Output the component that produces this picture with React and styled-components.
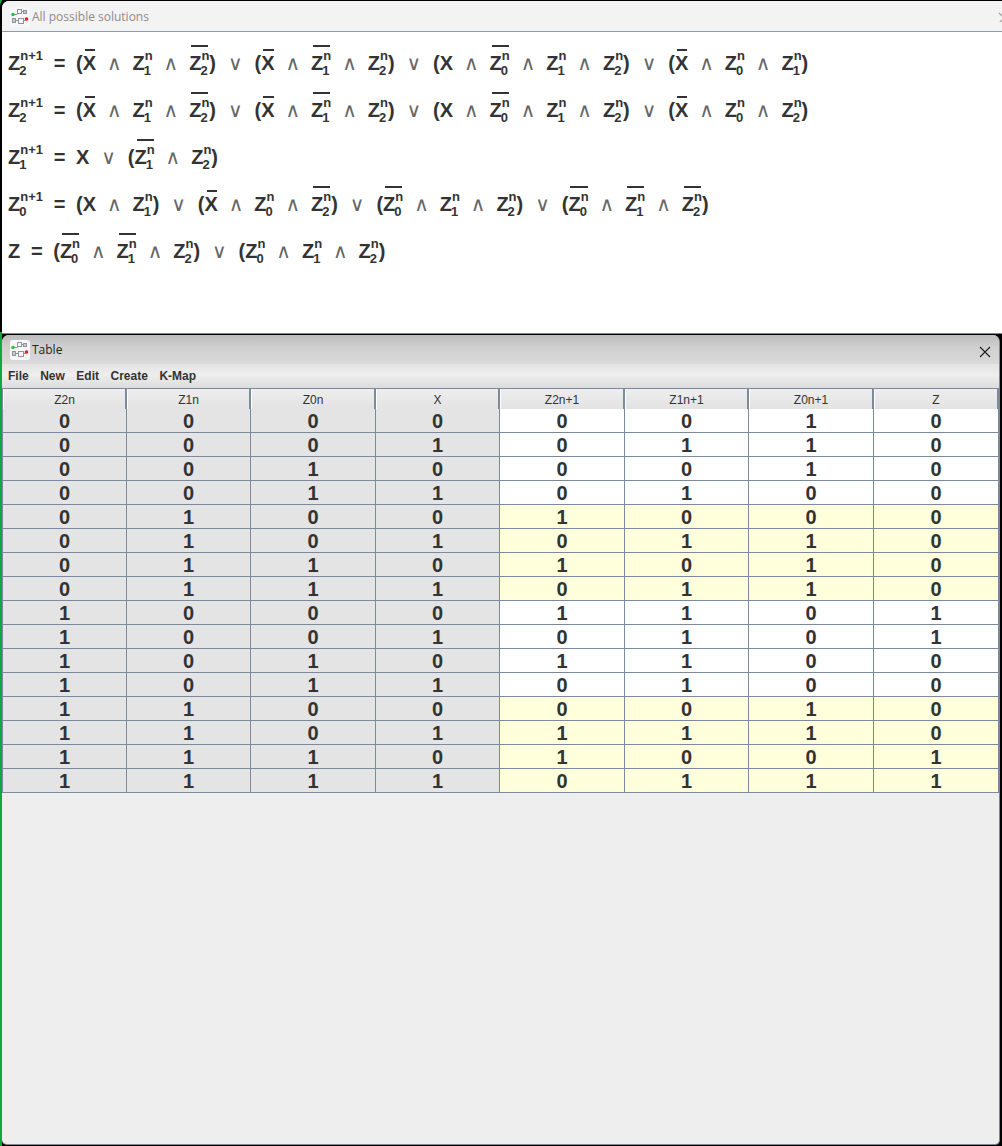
import styled, { createGlobalStyle } from "styled-components";

const GlobalStyle = createGlobalStyle`
html, body {
    margin: 0;
    padding: 0;
    background: #000000;
}
`

const FORMULAS = [
    "Z2+ = ( X' & z1 & z2' ) | ( X' & z1' & z2 ) | ( X & z0' & z1 & z2 ) | ( X' & z0 & z1 )",
    "Z2+ = ( X' & z1 & z2' ) | ( X' & z1' & z2 ) | ( X & z0' & z1 & z2 ) | ( X' & z0 & z2 )",
    "Z1+ = X | ( z1' & z2 )",
    "Z0+ = ( X & z1 ) | ( X' & z0 & z2' ) | ( z0' & z1 & z2 ) | ( z0' & z1' & z2' )",
    "Z = ( z0' & z1' & z2 ) | ( z0 & z1 & z2 )",
]

const HEADERS = ["Z2n", "Z1n", "Z0n", "X", "Z2n+1", "Z1n+1", "Z0n+1", "Z"]

const ROWS = [
    "00000010", "00010110", "00100010", "00110100",
    "01001000", "01010110", "01101010", "01110110",
    "10001101", "10010101", "10101100", "10110100",
    "11000010", "11011110", "11101001", "11110111",
]

const COLUMNS = "124px 124px 125px 124px 125px 124px 125px 125px"

function AppIcon(){
    return(
        <svg width="20" height="20" viewBox="0 0 20 20">
            <rect width="20" height="20" rx="3" fill="#f7f7f7"/>
            <g fill="none" stroke="#8d93a0" strokeWidth="1">
                <rect x="7.5" y="2.5" width="4" height="4"/>
                <rect x="13.5" y="3.5" width="3" height="3" fill="#c5cad2"/>
                <rect x="2.5" y="11.5" width="3" height="4" fill="#c5cad2"/>
                <rect x="8.5" y="11.5" width="5" height="5"/>
                <path d="M4 7.5h3.5M11.5 4.5h2M5.5 13.5h3M13.5 13.5h2"/>
            </g>
            <circle cx="3" cy="7.5" r="1.8" fill="#2ec04a"/>
            <circle cx="16.5" cy="12" r="1.8" fill="#e01f26"/>
        </svg>
    )
}

function CloseIcon({ color }){
    return(
        <svg width="12" height="12" viewBox="0 0 12 12">
            <path d="M1 1L11 11M11 1L1 11" stroke={color} strokeWidth="1.1" fill="none"/>
        </svg>
    )
}

function Token({ token }){
    if(token === "&") return <Operator>∧</Operator>
    if(token === "|") return <Operator $wide>∨</Operator>
    if(token === "=") return <Equals>=</Equals>
    if(token === "(" || token === ")") return <Big>{token}</Big>
    if(token === "Z") return <Big>Z</Big>
    if(token === "X") return <Big>X</Big>
    if(token === "X'") return <BarredX>X</BarredX>

    const isNext = token.endsWith("+")
    const barred = token.endsWith("'")
    return(
        <Term $barred={barred}>
            <Big>Z</Big>
            <Scripts>
                <Sup>{isNext ? "n+1" : "n"}</Sup>
                <Sub>{token[1]}</Sub>
            </Scripts>
        </Term>
    )
}

function TitleBar(){
    return(
        <SolutionsTitle>
            <AppIcon/>
            <SolutionsCaption>All possible solutions</SolutionsCaption>
            <CloseSlot><CloseIcon color="#9a9a9a"/></CloseSlot>
        </SolutionsTitle>
    )
}

export default function App(){
    return(
        <Desktop>
            <GlobalStyle/>
            <SolutionsWindow>
                <TitleBar/>
                <Formulas>
                    {FORMULAS.map((formula, i) => (
                        <FormulaLine key={i}>
                            {formula.split(" ").map((token, j) => <Token key={j} token={token}/>)}
                        </FormulaLine>
                    ))}
                </Formulas>
            </SolutionsWindow>
            <TableWindow>
                <TableTitle>
                    <AppIcon/>
                    <TableCaption>Table</TableCaption>
                    <TableClose><CloseIcon color="#1c1c1c"/></TableClose>
                </TableTitle>
                <MenuBar>
                    {["File", "New", "Edit", "Create", "K-Map"].map(item => <MenuItem key={item}>{item}</MenuItem>)}
                </MenuBar>
                <TruthTable>
                    <HeaderRow>
                        {HEADERS.map((header, i) => <HeaderCell key={i}>{header}</HeaderCell>)}
                    </HeaderRow>
                    {ROWS.map((row, i) => (
                        <DataRow key={i}>
                            {row.split("").map((value, j) => (
                                <Cell key={j} $input={j < 4} $highlight={j >= 4 && row[1] === "1"}>{value}</Cell>
                            ))}
                        </DataRow>
                    ))}
                </TruthTable>
            </TableWindow>
        </Desktop>
    )
}

const Desktop = styled.div`
width: 1002px;
height: 1146px;
overflow: hidden;
display: flex;
flex-direction: column;
align-items: flex-start;
padding-top: 1px;
box-sizing: border-box;
background: linear-gradient(to right, #0fa83c 0, #0fa83c 2px, #000000 2px);
font-family: "Liberation Sans", Arial, sans-serif;
`
const SolutionsWindow = styled.div`
width: 1000px;
height: 333px;
margin-left: 2px;
background-color: #FFFFFF;
border-radius: 7px 0 0 0;
border-bottom: 1px solid #7d8894;
box-shadow: -2px -2px 0 0 #000000;
box-sizing: border-box;
overflow: hidden;
flex-shrink: 0;
`
const SolutionsTitle = styled.div`
height: 31px;
background-color: #f3f3f3;
border-bottom: 1px solid #8b9cb0;
box-sizing: border-box;
display: flex;
align-items: center;
padding: 1px 0 0 8px;
`
const SolutionsCaption = styled.div`
margin-left: 2px;
font-family: "Open Sans", sans-serif;
font-size: 12px;
color: #8c8c8c;
flex: 1;
`
const CloseSlot = styled.div`
width: 4px;
height: 12px;
overflow: hidden;
margin-top: -1px;
`
const Formulas = styled.div`
padding: 7px 0 0 6px;
color: #333333;
`
const FormulaLine = styled.div`
display: flex;
align-items: center;
height: 47px;
`
const Big = styled.span`
display: block;
font-size: 20px;
font-weight: 700;
line-height: 30px;
`
const Term = styled.div`
display: flex;
position: relative;
height: 30px;
${props => props.$barred && `
&::before {
    content: "";
    position: absolute;
    top: -3px;
    left: 2px;
    right: 1px;
    height: 2px;
    background-color: #333333;
}
`}
`
const BarredX = styled(Big)`
position: relative;
&::before {
    content: "";
    position: absolute;
    top: 1px;
    left: 2px;
    right: 1px;
    height: 2px;
    background-color: #333333;
}
`
const Scripts = styled.div`
display: flex;
flex-direction: column;
font-size: 13px;
font-weight: 700;
`
const Sup = styled.span`
line-height: 16px;
`
const Sub = styled.span`
line-height: 14px;
margin-left: -1px;
`
const Operator = styled.span`
width: ${props => props.$wide ? "38.5px" : "36.5px"};
text-align: center;
font-family: "DejaVu Sans", sans-serif;
font-size: 20px;
font-weight: 400;
line-height: 30px;
color: #666666;
`
const Equals = styled.span`
width: 33px;
text-align: center;
font-size: 20px;
font-weight: 700;
line-height: 30px;
`
const TableWindow = styled.div`
width: 998px;
height: 810px;
margin: 1px 0 0 2px;
background-color: #eeeeee;
border-radius: 7px 7px 5px 5px;
border-right: 1px solid #7d8894;
border-bottom: 1px solid #7d8894;
box-sizing: border-box;
overflow: hidden;
flex-shrink: 0;
`
const TableTitle = styled.div`
height: 29px;
background: linear-gradient(to bottom, #bcbcbc 0, #cfcfcf 40%, #dadada 100%);
display: flex;
align-items: center;
padding-left: 8px;
`
const TableCaption = styled.div`
margin-left: 2px;
font-family: "Open Sans", sans-serif;
font-size: 12px;
color: #222222;
flex: 1;
`
const TableClose = styled.div`
width: 12px;
height: 12px;
margin-right: 8px;
`
const MenuBar = styled.div`
height: 24px;
background: linear-gradient(to bottom, #e4e4e4 0, #eeeeee 45%, #dcdcdc 100%);
display: flex;
align-items: center;
padding-left: 6px;
gap: 11.5px;
`
const MenuItem = styled.span`
font-size: 12px;
font-weight: 700;
color: #333333;
`
const TruthTable = styled.div`
width: 997px;
border-left: 1px solid #7b8a9c;
box-sizing: border-box;
`
const HeaderRow = styled.div`
display: grid;
grid-template-columns: ${COLUMNS};
height: 21px;
border-bottom: 1px solid #7b8a9c;
border-top: 1px solid #7b8a9c;
box-sizing: border-box;
`
const HeaderCell = styled.div`
background: linear-gradient(to bottom, #eeeeee 0, #e2e2e2 100%);
border-left: 1px solid #ffffff;
border-right: 2px solid #7b8a9c;
box-sizing: border-box;
font-size: 12px;
color: #333333;
text-align: center;
padding-top: 2px;
line-height: 19px;
`
const DataRow = styled.div`
display: grid;
grid-template-columns: ${COLUMNS};
height: 24px;
`
const Cell = styled.div`
background-color: ${props => props.$input ? "#e4e4e4" : props.$highlight ? "#ffffdc" : "#ffffff"};
border-right: 1px solid #7b8a9c;
border-bottom: 1px solid #7b8a9c;
box-sizing: border-box;
font-size: 20px;
font-weight: 700;
color: #333333;
text-align: center;
padding-top: 1px;
line-height: 22px;
`
